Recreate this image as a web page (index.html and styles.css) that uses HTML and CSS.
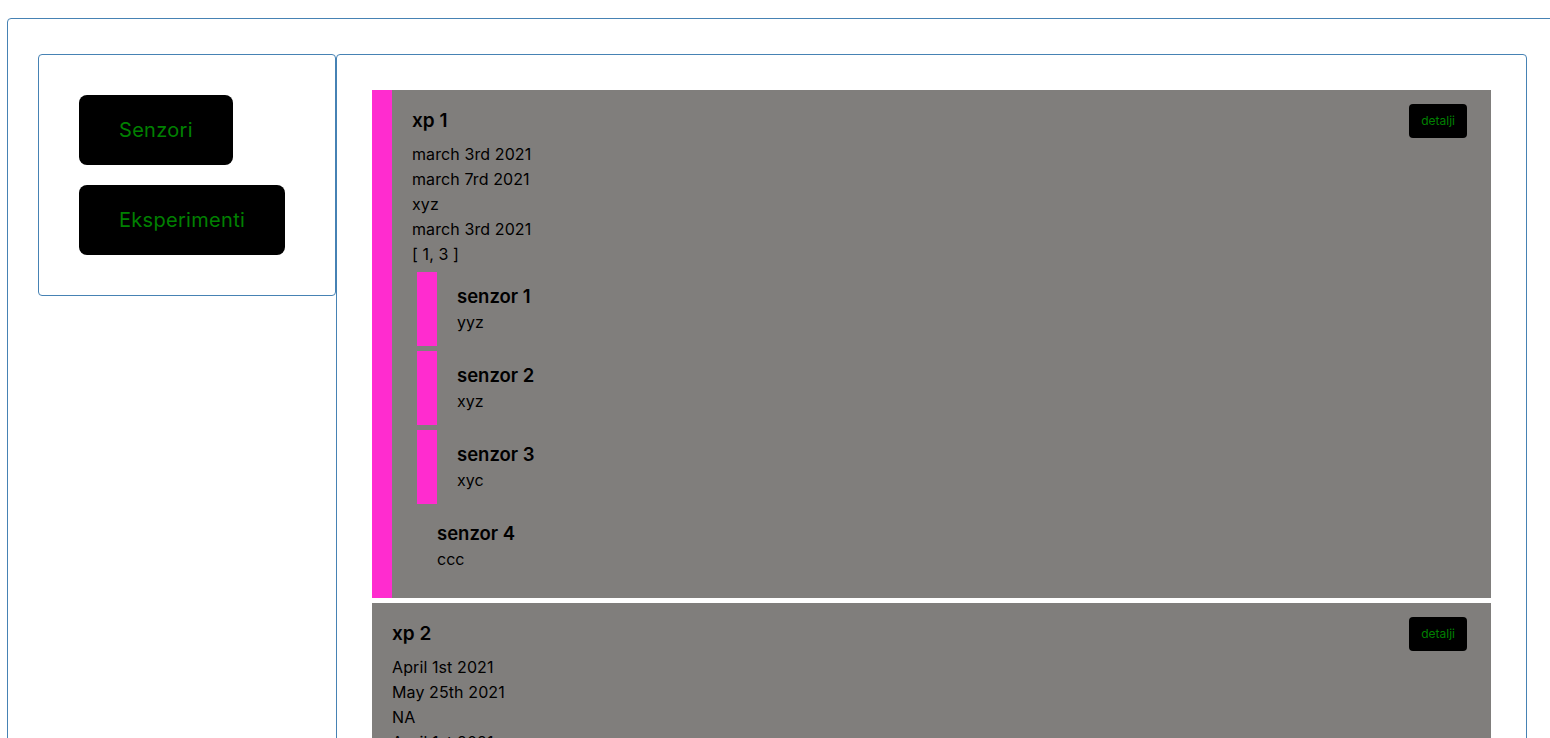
FILE: index.html
```html
<!DOCTYPE html>
<html lang="hr">
<head>
<meta charset="utf-8">
<title>Eksperimenti</title>
<link rel="stylesheet" href="styles.css">
</head>
<body>
<div class="app">
  <aside class="sidebar">
    <button class="nav-btn">Senzori</button>
    <button class="nav-btn">Eksperimenti</button>
  </aside>
  <main class="main">
    <div class="cards">
      <section class="card card-active">
        <div class="card-head">
          <h2 class="card-title">xp 1</h2>
          <button class="details-btn">detalji</button>
        </div>
        <div class="card-body">
          <div class="line">march 3rd 2021</div>
          <div class="line">march 7rd 2021</div>
          <div class="line">xyz</div>
          <div class="line">march 3rd 2021</div>
          <div class="line">[ 1, 3 ]</div>
        </div>
        <div class="sensors">
          <div class="sensor sensor-active">
            <div class="sensor-title">senzor 1</div>
            <div class="sensor-sub">yyz</div>
          </div>
          <div class="sensor sensor-active">
            <div class="sensor-title">senzor 2</div>
            <div class="sensor-sub">xyz</div>
          </div>
          <div class="sensor sensor-active">
            <div class="sensor-title">senzor 3</div>
            <div class="sensor-sub">xyc</div>
          </div>
          <div class="sensor">
            <div class="sensor-title">senzor 4</div>
            <div class="sensor-sub">ccc</div>
          </div>
        </div>
      </section>
      <section class="card">
        <div class="card-head">
          <h2 class="card-title">xp 2</h2>
          <button class="details-btn">detalji</button>
        </div>
        <div class="card-body">
          <div class="line">April 1st 2021</div>
          <div class="line">May 25th 2021</div>
          <div class="line">NA</div>
          <div class="line">April 1st 2021</div>
          <div class="line">[ 2 ]</div>
        </div>
      </section>
    </div>
  </main>
</div>
</body>
</html>
```

FILE: styles.css
```css
html, body {
  margin: 0;
  padding: 0;
  overflow: hidden;
  background: #ffffff;
}

body {
  font-family: Inter, "Noto Sans", sans-serif;
  color: #000000;
}

.app {
  display: flex;
  align-items: flex-start;
  margin: 18px 0 0 7px;
  width: 1600px;
  min-height: 900px;
  padding: 35px 30px;
  border: 1px solid #4682b4;
  border-radius: 4px;
  box-sizing: border-box;
}

.sidebar {
  width: 298px;
  flex: none;
  box-sizing: border-box;
  border: 1px solid #4682b4;
  border-radius: 4px;
  padding: 40px;
  display: flex;
  flex-direction: column;
  align-items: flex-start;
  gap: 20px;
}

.nav-btn {
  background: #000000;
  color: #008000;
  border: none;
  border-radius: 8px;
  font-family: inherit;
  font-size: 20px;
  letter-spacing: 0.3px;
  line-height: 30px;
  padding: 20px 40px;
  cursor: pointer;
}

.main {
  width: 1191px;
  flex: none;
  box-sizing: border-box;
  border: 1px solid #4682b4;
  border-radius: 4px;
  padding: 35px;
  min-height: 800px;
}

.cards {
  display: flex;
  flex-direction: column;
  gap: 5px;
}

.card {
  background: #807e7c;
  padding: 14px 24px 15px 20px;
}

.card-active {
  border-left: 20px solid #ff2ccf;
}

.card-head {
  display: flex;
  justify-content: space-between;
  align-items: center;
  margin-bottom: 4px;
}

.card-title {
  margin: 0;
  font-size: 19px;
  font-weight: 600;
  line-height: 26px;
}

.details-btn {
  background: #000000;
  color: #008000;
  border: none;
  border-radius: 4px;
  font-family: inherit;
  font-size: 12px;
  line-height: 18px;
  padding: 8px 12px;
  cursor: pointer;
}

.line {
  font-size: 16px;
  line-height: 25px;
  letter-spacing: 0.1px;
}

.sensors {
  display: flex;
  flex-direction: column;
  gap: 5px;
  margin-top: 5px;
}

.sensor {
  margin-left: 5px;
  padding: 11px 0 11px 20px;
}

.sensor-active {
  border-left: 20px solid #ff2ccf;
}

.sensor-title {
  font-size: 18.5px;
  font-weight: 600;
  line-height: 27px;
}

.sensor-sub {
  font-size: 16px;
  line-height: 25px;
}
```
